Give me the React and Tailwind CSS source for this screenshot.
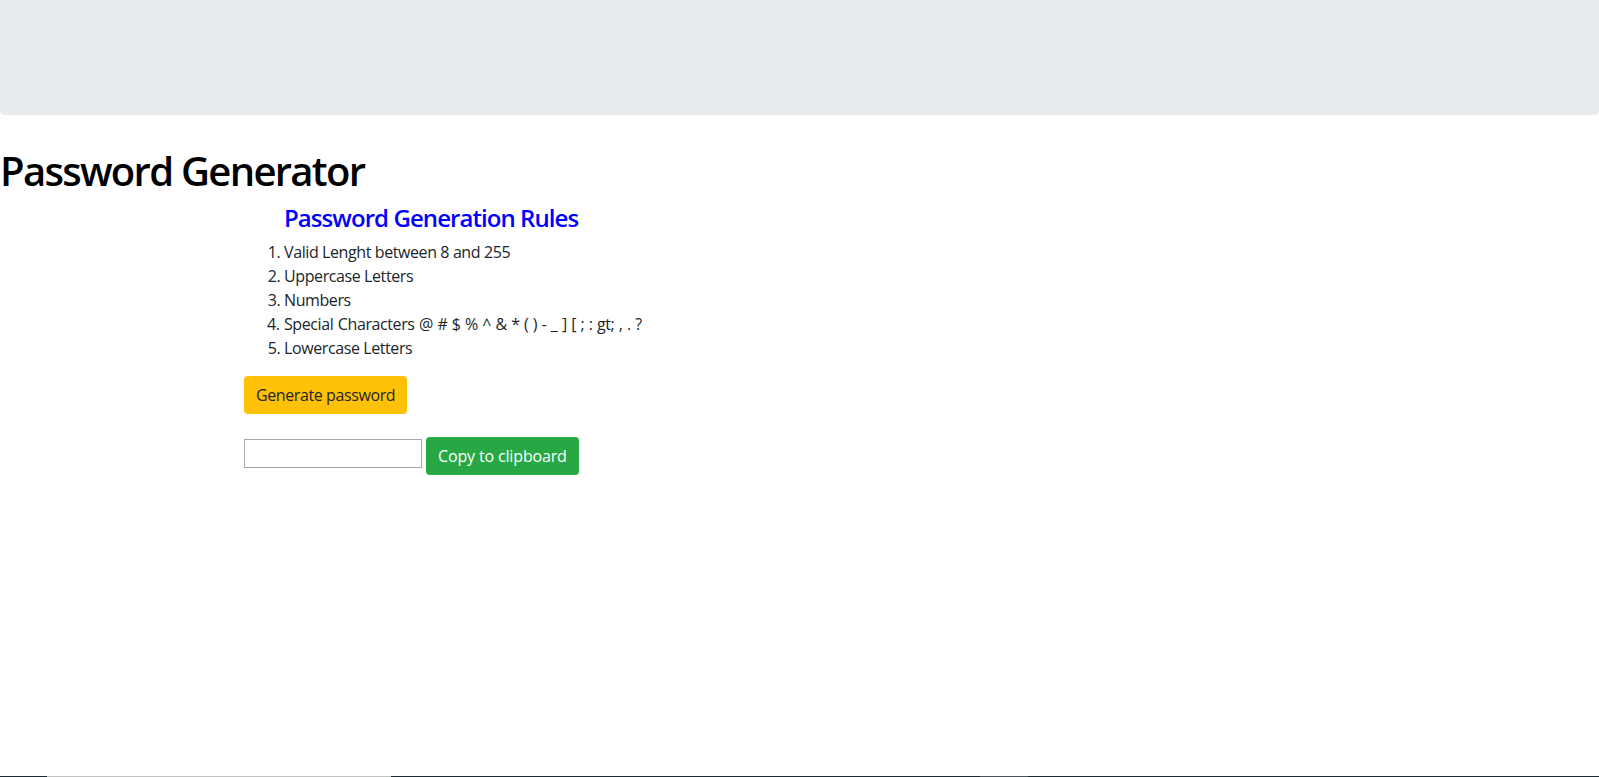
export default function App() {
  return (
    <div
      className="min-h-[777px] flex flex-col bg-white text-[#212529]"
      style={{ fontFamily: '"Open Sans", "Noto Sans", Arial, sans-serif' }}
    >
      <div className="flex-1">
        <div className="h-[115px] bg-[#e9ecef] rounded-b-[5px] mb-[32px]" />
        <h1 className="text-[40px] leading-[48px] font-semibold tracking-[-1.7px] text-black mb-[8px]">
          Password Generator
        </h1>
        <div className="pl-[244px] tracking-[-0.4px]">
          <h4 className="pl-[40px] text-[24px] leading-[29px] font-semibold tracking-[-0.93px] text-[#0000ff] mb-[8px]">
            Password Generation Rules
          </h4>
          <ol className="list-decimal pl-[40px] mb-[16px] text-[16px] leading-[24px]">
            <li>Valid Lenght between 8 and 255</li>
            <li>Uppercase Letters</li>
            <li>Numbers</li>
            <li className="[word-spacing:0.7px]">
              Special Characters @ # $ % ^ &amp; * ( ) - _ ] [ ; : gt; , . ?
            </li>
            <li>Lowercase Letters</li>
          </ol>
          <button className="h-[38px] px-[12px] bg-[#ffc107] text-[#212529] text-[16px] leading-[24px] rounded-[4px] tracking-[-0.4px]">
            Generate password
          </button>
          <div className="mt-[23px] flex items-start gap-[4px]">
            <input
              type="text"
              className="mt-[2px] w-[178px] h-[29px] border border-[#a9a9a9] bg-white px-[2px] outline-none"
            />
            <button className="h-[38px] px-[12px] bg-[#28a745] text-white text-[16px] leading-[24px] rounded-[4px] tracking-[-0.15px]">
              Copy to clipboard
            </button>
          </div>
        </div>
      </div>
      <div className="flex h-[1px]">
        <div className="w-[47px] bg-[#1e2a32]" />
        <div className="w-[344px] bg-[#c2c2c2]" />
        <div className="w-[589px] bg-[#1e2a32]" />
        <div className="w-[48px] bg-[#4a5358]" />
        <div className="flex-1 bg-[#1e2a32]" />
      </div>
    </div>
  );
}
